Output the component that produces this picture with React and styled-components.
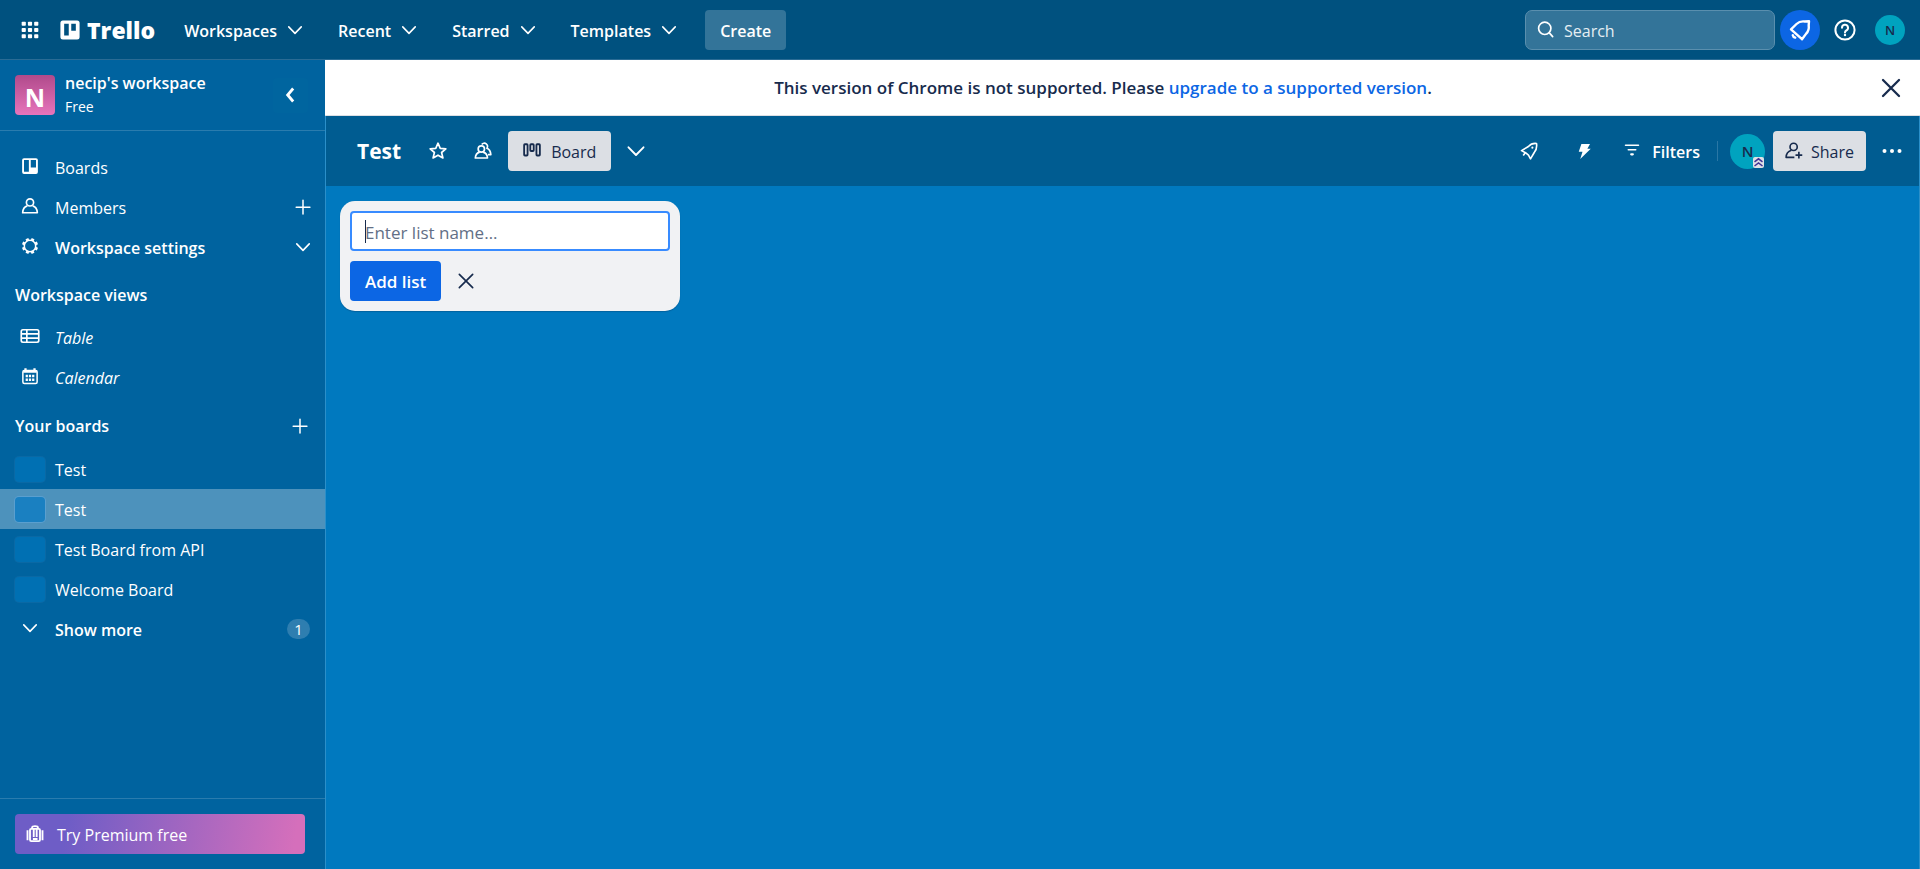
import React from "react";
import styled, { createGlobalStyle, css } from "styled-components";

const Global = createGlobalStyle`
  *, *::before, *::after { box-sizing: border-box; }
  html, body, #root { height: 100%; }
  body {
    margin: 0;
    font-family: "Open Sans", "Noto Sans", sans-serif;
    font-size: 16px;
    line-height: 24px;
    color: #fff;
    background: #0079bf;
  }
  button, input { font: inherit; color: inherit; }
  button { border: 0; padding: 0; background: none; cursor: pointer; }
  a { color: inherit; text-decoration: none; }
  ul { list-style: none; margin: 0; padding: 0; }
  svg { display: block; flex: none; }
`;

/* ---------- icons ---------- */

const Icon = ({ size = 20, children, sw = 2, ...rest }) => (
  <svg width={size} height={size} viewBox="0 0 24 24" fill="none" stroke="currentColor" strokeWidth={sw} aria-hidden="true" {...rest}>
    {children}
  </svg>
);

const Chevron = ({ size = 20 }) => (
  <Icon size={size} sw={1.9}>
    <path d="M4.500 8.300l7.500 7.700 7.500-7.700" strokeLinecap="round" strokeLinejoin="round" />
  </Icon>
);
const ChevronLeft = () => (
  <Icon sw={3.4}><path d="M13.500 5.500L8 12l5.500 6.500" strokeLinecap="square" /></Icon>
);
const Plus = () => (
  <Icon sw={1.8}><path d="M12 4v16.500M3.800 12.200h16.500" strokeLinecap="round" /></Icon>
);
const Close = ({ size = 20, sw = 2 }) => (
  <Icon size={size} sw={sw}><path d="M4 4l16 16M20 4L4 20" strokeLinecap="round" /></Icon>
);
const Apps = () => (
  <Icon size={20} stroke="none">
    {[2, 9.500, 17].map((y) => [2, 9.500, 17].map((x) => (
      <rect key={x + "-" + y} x={x} y={y} width="5" height="5" rx="1" fill="currentColor" />
    )))}
  </Icon>
);
const BoardLogo = ({ size = 20 }) => (
  <Icon size={size} stroke="none">
    <path fill="currentColor" fillRule="evenodd" d="M3.500 .5h17a3 3 0 0 1 3 3v17a3 3 0 0 1-3 3h-17a3 3 0 0 1-3-3v-17a3 3 0 0 1 3-3zM5 4.500v14h5.500v-14zM13.500 4.500v8.500h5.500v-8.500z" />
  </Icon>
);
const BoardsIcon = () => (
  <Icon size={18} stroke="none">
    <path fill="currentColor" fillRule="evenodd" d="M4 1.500h16a2.500 2.500 0 0 1 2.500 2.500v16a2.500 2.500 0 0 1-2.500 2.500H4A2.500 2.500 0 0 1 1.500 20V4A2.500 2.500 0 0 1 4 1.500zM4 4v15.500h6.500V4zM13 4v10h7V4z" />
  </Icon>
);
const Person = () => (
  <Icon size={18} sw={2.200}>
    <circle cx="12" cy="7.200" r="4.800" />
    <path d="M8.500 11.800c-3.800 1-6 4-6.300 9.200h19.600c-.3-5.200-2.500-8.200-6.300-9.200" strokeLinejoin="round" />
  </Icon>
);
const Gear = () => (
  <Icon size={18}>
    <circle cx="12" cy="12" r="7.600" />
    <path strokeWidth="4" d="M9.100 5L7.900 2.100M14.900 5L16.100 2.100M19 9.100L21.900 7.900M19 14.900L21.900 16.100M14.900 19L16.100 21.900M9.100 19L7.900 21.900M5 14.900L2.100 16.100M5 9.100L2.100 7.900" />
  </Icon>
);
const TableIcon = () => (
  <Icon>
    <rect x="1.500" y="4.500" width="21" height="15" rx="2" />
    <path d="M2 9.500h20M2 14.500h20M8.200 4.500v15" />
  </Icon>
);
const CalendarIcon = () => (
  <Icon size={18}>
    <rect x="2.500" y="4.500" width="19" height="17.500" rx="2" />
    <path strokeWidth="3" d="M3 6h18M6 1.500v3M18 1.500v3" />
    <path strokeWidth="3.400" d="M6.200 12h3M10.500 12h3M14.800 12h3M6.200 17h3M10.500 17h3M14.800 17h3" />
  </Icon>
);
const SearchIcon = () => (
  <Icon><circle cx="10.500" cy="10" r="7.400" /><path d="M16 15.500L20 20" strokeLinecap="round" /></Icon>
);
const Bell = () => (
  <Icon size={24} sw={2.400} strokeLinejoin="round" strokeLinecap="round">
    <path d="M3 11.300L8.500 6C11 3.600 14 3.100 16.800 3.500L21 3.200L20.700 7.300C21.100 10.200 20.600 13 18.200 15.600L14 21.200z" />
    <path d="M4.800 17.200c.2 1.200 1 2 2.400 2.400" />
  </Icon>
);
const Help = () => (
  <Icon size={24} sw={2}>
    <circle cx="12" cy="12" r="9.600" />
    <path d="M9 9.800a3 3 0 1 1 4.300 2.700c-.9.450-1.300.9-1.300 1.900" strokeLinecap="round" />
    <circle cx="12" cy="17" r="1.200" fill="currentColor" stroke="none" />
  </Icon>
);
const Star = () => (
  <Icon><path strokeLinejoin="round" d="M12 2.600l2.700 6.200 6.700.6-5.100 4.400 1.600 6.600L12 17l-5.900 3.400 1.600-6.600-5.100-4.400 6.700-.6z" /></Icon>
);
const People = () => (
  <Icon>
    <circle cx="10" cy="9.600" r="3.800" />
    <path d="M8 13.400c-3.200.8-5 3-5.200 7h14.600c-.2-4-2-6.200-5.300-7" strokeLinejoin="round" />
    <path d="M10.500 4.200a3.700 3.700 0 1 1 6.200 4.600c2.800 1.200 4.400 3.700 4.700 7.600h-3.400" strokeLinejoin="round" />
  </Icon>
);
const Columns = () => (
  <Icon size={18} sw={2.400}>
    <rect x="1.500" y="3" width="4.600" height="15" rx="1" />
    <rect x="9.700" y="3" width="4.600" height="9" rx="1" />
    <rect x="17.900" y="3" width="4.600" height="15" rx="1" />
  </Icon>
);
const Rocket = () => (
  <Icon size={18} sw={2.200}>
    <path d="M22 2c-4.500-.5-8 .8-10.800 4L2 11.500l5.300 2.700 4 3.300 2.700 5 5-8.500c2.500-3 3.700-7.500 3-12z" strokeLinejoin="round" />
    <path d="M7.300 14l-3 4" />
    <circle cx="16.500" cy="7.500" r="1.400" fill="currentColor" stroke="none" />
  </Icon>
);
const Bolt = () => (
  <Icon size={18} stroke="none"><path fill="currentColor" d="M8.500 2.500h11.500l-3.500 6.500h4.500L7 22.500l3-9.500H5z" /></Icon>
);
const FilterIcon = () => (
  <Icon sw={1.8}><path d="M4.200 5h15.600M7.500 10.500h9" strokeLinecap="round" /><path d="M11 16h2" strokeWidth="2.600" strokeLinecap="round" /></Icon>
);
const PersonAdd = () => (
  <Icon size={18} sw={2.200}>
    <circle cx="11.500" cy="6.500" r="4.800" />
    <path d="M8.500 11C4 12.500 1.500 15.500 1.500 20.500h11M18.500 13v9M14 17.500h9" strokeLinejoin="round" />
  </Icon>
);
const More = () => (
  <Icon size={24} stroke="none">
    {[4.500, 12, 19.500].map((x) => <circle key={x} cx={x} cy="12" r="2" fill="currentColor" />)}
  </Icon>
);
const Briefcase = () => (
  <Icon sw={2.200}>
    <path d="M3 7.500v12M21 7.500v12M8.500 5.500V4.300c0-1.200 1-1.800 3.500-1.800s3.500.6 3.500 1.800v1.200" />
    <rect x="6" y="5.800" width="12" height="14.700" rx="1.500" />
    <path d="M10.500 6v9.500M14 6v9.500M9.500 18h5.500" />
  </Icon>
);
const AdminBadgeIcon = () => (
  <svg width="11" height="11" viewBox="0 0 11 11" fill="none" stroke="#403294" strokeWidth="1.500" aria-hidden="true">
    <path d="M1.500 4.800l4-3 4 3M1.500 9l4-3 4 3" />
  </svg>
);

/* ---------- shared ---------- */

/* Labels sit slightly below the optical centre of their icons. */
const Label = styled.span`
  padding-top: 2px;
`;

const Avatar = styled.span`
  position: relative;
  display: flex;
  align-items: center;
  justify-content: center;
  flex: none;
  width: ${(p) => p.$size}px;
  height: ${(p) => p.$size}px;
  border-radius: 50%;
  background: #00a3bf;
  color: #172b4d;
  font-size: ${(p) => p.$font}px;
  font-weight: 600;
`;

const IconButton = styled.button`
  display: flex;
  align-items: center;
  justify-content: center;
  flex: none;
  width: ${(p) => p.$w || 40}px;
  height: ${(p) => p.$h || 40}px;
  border-radius: ${(p) => (p.$round ? "50%" : "4px")};
  background: ${(p) => p.$bg || "transparent"};
`;

/* ---------- top bar ---------- */

const Page = styled.div`
  min-height: 100%;
  display: flex;
  flex-direction: column;
`;

const TopBar = styled.header`
  display: flex;
  align-items: center;
  justify-content: space-between;
  height: 60px;
  padding: 0 10px;
  background: #00517f;
  border-bottom: 1px solid #2a6b94;
`;

const Cluster = styled.div`
  display: flex;
  align-items: center;
  gap: ${(p) => p.$gap || 0}px;
`;

const Brand = styled.a`
  display: flex;
  align-items: center;
  gap: 7px;
  margin: 0 14px 0 10px;
  font-size: 23px;
  font-weight: 800;
`;

const NavButton = styled.button`
  display: flex;
  align-items: center;
  gap: 8px;
  height: 40px;
  padding: 0 8px 0 15px;
  margin-right: 10px;
  font-weight: 600;
`;

const CreateButton = styled.button`
  height: 40px;
  padding: 2px 15px 0;
  margin-left: 8px;
  border-radius: 4px;
  background: #337499;
  font-weight: 600;
`;

const SearchBox = styled.label`
  display: flex;
  align-items: center;
  gap: 8px;
  width: 250px;
  height: 40px;
  padding: 0 10px;
  border: 1px solid #5a8fae;
  border-radius: 7px;
  background: #337499;
  input {
    flex: 1;
    min-width: 0;
    padding: 2px 0 0;
    border: 0;
    outline: 0;
    background: none;
  }
  input::placeholder { color: #e5eef3; opacity: 1; }
`;

/* ---------- sidebar ---------- */

const Body = styled.div`
  flex: 1;
  display: flex;
`;

const Sidebar = styled.nav`
  display: flex;
  flex-direction: column;
  flex: none;
  width: 325px;
  background: #00639f;
`;

const WorkspaceHeader = styled.div`
  display: flex;
  align-items: center;
  gap: 10px;
  height: 71px;
  padding: 0 17px 0 15px;
  border-bottom: 1px solid #2a7cae;
`;

const WorkspaceLogo = styled.span`
  display: flex;
  align-items: center;
  justify-content: center;
  width: 40px;
  height: 40px;
  padding-top: 3px;
  border-radius: 4px;
  background: linear-gradient(#b04a8b, #e774bb);
  font-size: 25px;
  font-weight: 700;
`;

const WorkspaceName = styled.div`
  flex: 1;
  strong { display: block; font-weight: 600; }
  small { display: block; font-size: 14px; }
`;

const SideList = styled.ul`
  padding-top: ${(p) => p.$top || 0}px;
`;

const SideRow = styled.li`
  display: flex;
  align-items: center;
  height: 40px;
  padding-right: 12px;
  background: ${(p) => (p.$active ? "#4d92bc" : "transparent")};
`;

const sideItem = css`
  flex: 1;
  display: flex;
  align-items: center;
  gap: 10px;
  height: 40px;
  padding-left: 15px;
  text-align: left;
  font-weight: ${(p) => (p.$bold ? 600 : 400)};
  font-style: ${(p) => (p.$italic ? "italic" : "normal")};
`;
const SideLink = styled.a`${sideItem}`;
const SideButton = styled.button`${sideItem}`;

const IconSlot = styled.span`
  display: flex;
  justify-content: center;
  width: 30px;
  padding-bottom: 2px;
`;

const Swatch = styled.span`
  width: 30px;
  height: 25px;
  border-radius: 4px;
  background: ${(p) => (p.$active ? "#1a80c1" : "#0070b3")};
  box-shadow: 0 0 0 1px ${(p) => (p.$active ? "#5a9fcf" : "#0a69a5")};
`;

const SideHeading = styled.div`
  display: flex;
  align-items: center;
  justify-content: space-between;
  height: ${(p) => p.$h}px;
  padding: 6px 5px 0 15px;
  h2 { margin: 0; font-size: 16px; font-weight: 600; }
`;

const Count = styled.span`
  width: 23px;
  margin-right: 3px;
  border-radius: 10px;
  background: #2e7eb0;
  font-size: 15px;
  line-height: 20px;
  text-align: center;
`;

const SideFooter = styled.div`
  margin-top: auto;
  padding: 15px 20px 15px 15px;
  border-top: 1px solid #2a7cae;
`;

const PremiumButton = styled.button`
  display: flex;
  align-items: center;
  gap: 12px;
  width: 100%;
  height: 40px;
  padding: 0 10px;
  border-radius: 4px;
  background: linear-gradient(99deg, #6e5dc6 18%, #d56fbb 96%);
`;

/* ---------- main ---------- */

const Main = styled.main`
  flex: 1;
  min-width: 0;
  display: flex;
  flex-direction: column;
`;

const Banner = styled.div`
  display: flex;
  align-items: center;
  height: 56px;
  padding: 0 9px 0 10px;
  border-bottom: 1px solid #dcdfe4;
  background: #fff;
  color: #172b4d;
  font-size: 17px;
  font-weight: 600;
  p { flex: 1; margin: 0; padding-top: 1px; text-align: center; }
  a { color: #0c66e4; }
`;

const BoardArea = styled.div`
  flex: 1;
  background: #0079bf;
  border: solid #ffffff2b;
  border-width: 0 1px;
`;

const BoardBar = styled.div`
  display: flex;
  align-items: center;
  justify-content: space-between;
  height: 70px;
  padding: 0 7px 0 31px;
  background: #005c91;
  h1 { margin: 0 12px 0 0; font-size: 21px; line-height: 30px; font-weight: 700; }
`;

const GreyButton = styled.button`
  display: flex;
  align-items: center;
  gap: ${(p) => p.$gap}px;
  height: 40px;
  padding: 0 ${(p) => p.$pad}px;
  border-radius: 4px;
  background: #dcdfe4;
  color: #172b4d;
`;

const FilterButton = styled.button`
  display: flex;
  align-items: center;
  gap: 10px;
  height: 40px;
  padding-left: 3px;
  font-weight: 600;
`;

const Divider = styled.span`
  width: 1px;
  height: 20px;
  margin: 0 12px 0 17px;
  background: #2a77a5;
`;

const AdminBadge = styled.span`
  position: absolute;
  right: 1px;
  bottom: 1px;
  background: #dfe1e6;
  border-radius: 2px;
`;

const Canvas = styled.div`
  padding: 15px 14px;
`;

const ListForm = styled.form`
  width: 340px;
  padding: 10px;
  border-radius: 15px;
  background: #f1f2f4;
  box-shadow: 0 1px 1px #091e4240;
  color: #172b4d;
  font-size: 17px;
`;

const ListInput = styled.input`
  display: block;
  width: 100%;
  height: 40px;
  padding: 2px 13px 0;
  border: 2px solid #388bff;
  border-radius: 4px;
  outline: 0;
  background: #fff;
  &::placeholder { color: #626f86; opacity: 1; }
  /* steady caret while the field is empty */
  &:placeholder-shown {
    caret-color: transparent;
    background: linear-gradient(#172b4d, #172b4d) 13px 50% / 1px 23px no-repeat #fff;
  }
`;

const AddButton = styled.button`
  height: 40px;
  padding: 2px 15px 0;
  border-radius: 4px;
  background: #0c66e4;
  color: #fff;
  font-weight: 600;
`;

const FormActions = styled.div`
  display: flex;
  align-items: center;
  gap: 5px;
  margin-top: 10px;
`;

const boards = ["Test", "Test", "Test Board from API", "Welcome Board"];

export default function App() {
  return (
    <Page>
      <Global />
      <TopBar>
        <Cluster>
          <IconButton aria-label="More apps"><Apps /></IconButton>
          <Brand href="#"><BoardLogo />Trello</Brand>
          {["Workspaces", "Recent", "Starred", "Templates"].map((label) => (
            <NavButton key={label}><Label>{label}</Label><Chevron /></NavButton>
          ))}
          <CreateButton>Create</CreateButton>
        </Cluster>
        <Cluster $gap={5}>
          <SearchBox>
            <SearchIcon />
            <input type="search" placeholder="Search" aria-label="Search" />
          </SearchBox>
          <IconButton $round $bg="#0c66e4" aria-label="Notifications"><Bell /></IconButton>
          <IconButton $round aria-label="Information"><Help /></IconButton>
          <IconButton $round aria-label="Account"><Avatar $size={30} $font={13}>N</Avatar></IconButton>
        </Cluster>
      </TopBar>

      <Body>
        <Sidebar>
          <WorkspaceHeader>
            <WorkspaceLogo>N</WorkspaceLogo>
            <WorkspaceName><strong>necip's workspace</strong><small>Free</small></WorkspaceName>
            <IconButton $w={35} $h={35} $bg="#00659f" aria-label="Collapse sidebar"><ChevronLeft /></IconButton>
          </WorkspaceHeader>

          <SideList $top={16}>
            <SideRow><SideLink href="#"><IconSlot><BoardsIcon /></IconSlot><Label>Boards</Label></SideLink></SideRow>
            <SideRow>
              <SideLink href="#"><IconSlot><Person /></IconSlot><Label>Members</Label></SideLink>
              <IconButton $w={20} aria-label="Invite members"><Plus /></IconButton>
            </SideRow>
            <SideRow>
              <SideButton $bold><IconSlot><Gear /></IconSlot><Label>Workspace settings</Label></SideButton>
              <Chevron />
            </SideRow>
          </SideList>

          <SideHeading $h={50}><h2>Workspace views</h2></SideHeading>
          <SideList>
            <SideRow><SideLink href="#" $italic><IconSlot><TableIcon /></IconSlot><Label>Table</Label></SideLink></SideRow>
            <SideRow><SideLink href="#" $italic><IconSlot><CalendarIcon /></IconSlot><Label>Calendar</Label></SideLink></SideRow>
          </SideList>

          <SideHeading $h={52}>
            <h2>Your boards</h2>
            <IconButton aria-label="Create board"><Plus /></IconButton>
          </SideHeading>
          <SideList>
            {boards.map((name, i) => (
              <SideRow key={i} $active={i === 1}>
                <SideLink href="#"><Swatch $active={i === 1} /><Label>{name}</Label></SideLink>
              </SideRow>
            ))}
            <SideRow>
              <SideButton $bold><IconSlot><Chevron /></IconSlot><Label>Show more</Label></SideButton>
              <Count>1</Count>
            </SideRow>
          </SideList>

          <SideFooter>
            <PremiumButton><Briefcase /><Label>Try Premium free</Label></PremiumButton>
          </SideFooter>
        </Sidebar>

        <Main>
          <Banner>
            <p>This version of Chrome is not supported. Please <a href="#">upgrade to a supported version</a>.</p>
            <IconButton aria-label="Dismiss"><Close size={24} sw={2.300} /></IconButton>
          </Banner>
          <BoardArea>
            <BoardBar>
              <Cluster $gap={5}>
                <h1>Test</h1>
                <IconButton aria-label="Star board"><Star /></IconButton>
                <IconButton aria-label="Board visibility"><People /></IconButton>
                <GreyButton $gap={10} $pad={15}><Columns /><Label>Board</Label></GreyButton>
                <IconButton aria-label="Board views"><Chevron size={24} /></IconButton>
              </Cluster>
              <Cluster>
                <Cluster $gap={15}>
                  <IconButton aria-label="Power-Ups"><Rocket /></IconButton>
                  <IconButton aria-label="Automation"><Bolt /></IconButton>
                  <FilterButton><FilterIcon /><Label>Filters</Label></FilterButton>
                </Cluster>
                <Divider />
                <Cluster $gap={8}>
                  <Avatar $size={35} $font={15}>N<AdminBadge><AdminBadgeIcon /></AdminBadge></Avatar>
                  <Cluster $gap={6}>
                    <GreyButton $gap={8} $pad={12}><PersonAdd /><Label>Share</Label></GreyButton>
                    <IconButton aria-label="Board menu"><More /></IconButton>
                  </Cluster>
                </Cluster>
              </Cluster>
            </BoardBar>
            <Canvas>
              <ListForm onSubmit={(e) => e.preventDefault()}>
                <ListInput type="text" placeholder="Enter list name…" aria-label="List name" autoFocus />
                <FormActions>
                  <AddButton type="submit">Add list</AddButton>
                  <IconButton type="button" aria-label="Cancel"><Close /></IconButton>
                </FormActions>
              </ListForm>
            </Canvas>
          </BoardArea>
        </Main>
      </Body>
    </Page>
  );
}
